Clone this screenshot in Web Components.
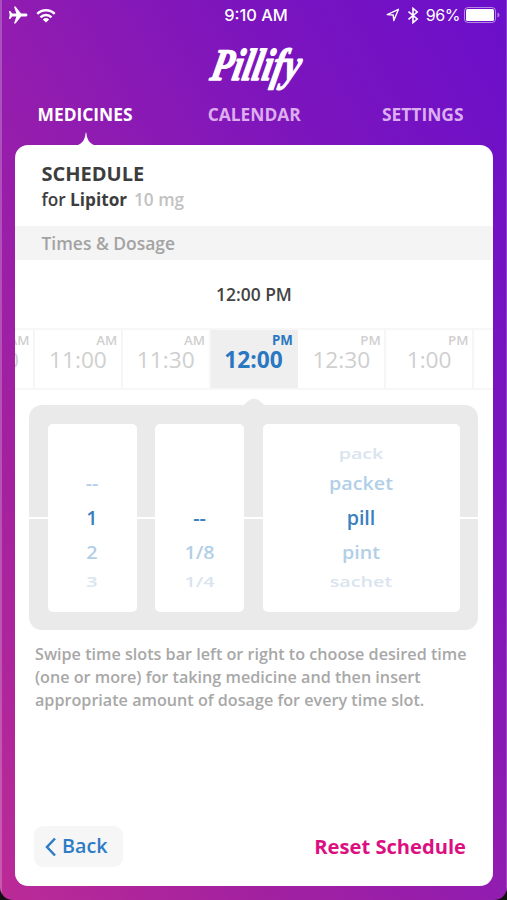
<!DOCTYPE html>
<html lang="en">
<head>
<meta charset="utf-8">
<title>Pillify</title>
<style>
html{background:#111}
body{margin:0;width:507px;height:900px;overflow:hidden;font-family:"Open Sans",sans-serif;font-weight:600}
</style>
</head>
<body>
<pill-app></pill-app>

<template id="t-app">
<style>
:host{display:flex;flex-direction:column;box-sizing:border-box;width:507px;height:900px;padding:0 14px 14px 15px;border-radius:0 0 13px 13px;
background:linear-gradient(90deg,rgba(255,255,255,.22) 0 2px,transparent 2px 506px,rgba(255,255,255,.2) 506px),linear-gradient(to bottom left,#6b0fcb 0%,#7a14be 25%,#911cb0 50%,#a3219f 75%,#bb2b97 100%)}
</style>
<status-bar></status-bar>
<brand-logo></brand-logo>
<nav-tabs></nav-tabs>
<schedule-card></schedule-card>
</template>

<template id="t-status">
<style>
:host{display:grid;grid-template-columns:1fr auto 1fr;align-items:center;height:30px;margin:0 -6px 0 -7px;color:#fff;font-family:Inter,sans-serif;font-size:16.4px;font-weight:500}
.l{display:flex;align-items:center;gap:8px}
.r{display:flex;align-items:center;justify-content:flex-end;font-size:16px;font-weight:400;letter-spacing:-.4px;margin-right:-1px}
svg{display:block;flex:none}
.mid{margin-left:5px}
</style>
<div class="l">
<svg width="20" height="18" viewBox="0 0 20 18" fill="#fff"><path d="M19.500 9c0-.8-.8-1.500-2-1.500h-4.400L7.500.4H6L8.400 7.500H4.200L2.300 5.100H.9L1.700 9 .9 12.900h1.400l1.900-2.400h4.200L6 17.600h1.500l5.600-7.100h4.400c1.200 0 2-.7 2-1.500Z"/></svg>
<svg width="20" height="15" viewBox="0 0 20 15"><g fill="none" stroke="#fff" stroke-width="2.500"><path d="M1.300 5.900a12.300 12.300 0 0 1 17.400 0"/><path d="M4.500 9.300a7.900 7.900 0 0 1 11 0"/></g><path d="M10 14.500 6.800 11.400a4.900 4.900 0 0 1 6.400 0Z" fill="#fff"/></svg>
</div>
<span class="mid">9:10 AM</span>
<div class="r">
<svg width="14" height="14" viewBox="0 0 14 14" style="margin-right:7px"><path d="M1.200 6.600 12.500 1.300 7.800 12.600 7.200 7Z" fill="none" stroke="#fff" stroke-width="1.400" stroke-linejoin="round"/></svg>
<svg width="12" height="17" viewBox="0 0 12 17" style="margin-right:7px"><path d="M1.500 4.600 10.200 12 6 15.600V1.400L10.200 5 1.500 12.400" fill="none" stroke="#fff" stroke-width="1.600"/></svg>
<span>96%</span>
<svg width="36" height="16" viewBox="0 0 36 16" style="margin-left:4px"><rect x=".5" y=".5" width="31" height="15" rx="3.500" fill="none" stroke="#fff" stroke-opacity=".5"/><rect x="2" y="2" width="28" height="12" rx="1.500" fill="#fff"/><path d="M33.500 5.500q2 .7 2 2.500t-2 2.500Z" fill="#fff" fill-opacity=".5"/></svg>
</div>
</template>

<template id="t-logo">
<style>
:host{display:flex;justify-content:center;height:68px}
svg{display:block;overflow:visible}
text{font:italic 700 31px "Liberation Serif",serif;fill:#fff;stroke:#fff;stroke-width:1;stroke-linejoin:round}
</style>
<svg width="96" height="68" viewBox="0 0 96 68"><text transform="translate(3 50) skewX(-12) scale(1 1.460)" textLength="89" lengthAdjust="spacingAndGlyphs">Pillify</text></svg>
</template>

<template id="t-tabs">
<style>
:host{display:flex;justify-content:space-between;align-items:center;height:34px;margin:-1px 29.500px 14px 22.500px;color:#dcaef0;font-size:17.400px;font-weight:700}
.on{color:#fff;position:relative}
.on svg{position:absolute;left:36px;top:30px}
.mid{margin-left:-6px}
</style>
<span class="on">MEDICINES<svg width="24" height="14" viewBox="0 0 24 14"><path d="M0 14C8 13 11 8 11.600 1q.4-1 .8 0C13 8 16 13 24 14Z" fill="#fff"/></svg></span>
<span class="mid">CALENDAR</span>
<span>SETTINGS</span>
</template>

<template id="t-card">
<style>
:host{display:flex;flex-direction:column;flex:1;min-height:0;background:#fff;border-radius:13px;overflow:hidden}
header{padding:15px 26px 0 26.500px;height:66px;color:#3d3d3d}
h1{margin:0;font-size:20px;line-height:28px;font-weight:700}
.sub{font-size:17.200px;line-height:25px;margin-top:-1px}
.sub b{font-weight:700}.sub span{color:#c2c2c2;margin-left:2.500px}
h2{margin:0;height:34px;line-height:34px;padding-left:26.500px;background:#f4f4f4;color:#a3a3a3;font-size:17.450px;font-weight:600}
.now{text-align:center;color:#434343;font-size:17.400px;line-height:24px;margin:22px 0}
p{margin:13px 20px 0;color:#a8a8a8;font-size:16.170px;line-height:23px;white-space:nowrap}
footer{display:flex;justify-content:space-between;align-items:center;margin:auto 27px 19px 19px}
</style>
<header><h1>SCHEDULE</h1><div class="sub">for <b>Lipitor</b> <span>10 mg</span></div></header>
<h2>Times &amp; Dosage</h2>
<div class="now">12:00 PM</div>
<time-strip></time-strip>
<dosage-picker></dosage-picker>
<p>Swipe time slots bar left or right to choose desired time<br>(one or more) for taking medicine and then insert<br>appropriate amount of dosage for every time slot.</p>
<footer><back-button>Back</back-button><reset-link>Reset Schedule</reset-link></footer>
</template>

<template id="t-strip">
<style>
:host{display:flex;justify-content:center;height:62px;width:479px;overflow:hidden;border-block:2px solid #f7f7f7;box-sizing:border-box}
</style>
<time-slot period="AM">10:30</time-slot><time-slot period="AM">11:00</time-slot><time-slot period="AM">11:30</time-slot><time-slot period="PM" selected>12:00</time-slot><time-slot period="PM">12:30</time-slot><time-slot period="PM">1:00</time-slot><time-slot></time-slot>
</template>

<template id="t-slot">
<style>
:host{display:flex;flex-direction:column;flex:none;box-sizing:border-box;width:87.800px;height:58px;border-right:2px solid #f6f6f6;color:#cfcfcf;text-align:center;font-size:22.700px;line-height:26px;font-weight:500}
small{display:block;font-size:13.300px;line-height:16px;height:16px;text-align:right;padding-right:3.500px;font-weight:600;margin-top:2px;margin-bottom:-1px}
:host([selected]){background:#efefef;border-color:#efefef;color:#2b78c2;font-weight:700}
:host([selected]) small{font-weight:700}
</style>
<small></small><div><slot></slot></div>
</template>

<template id="t-picker">
<style>
:host{display:grid;grid-template-columns:89px 89px 197px;column-gap:18.500px;position:relative;box-sizing:border-box;width:449px;height:225px;margin:15px 0 0 14px;padding:19px 18.500px;border-radius:13px;background:linear-gradient(transparent 112px,#fff 112px 114.500px,transparent 114.500px),#eaeaea}
.notch{position:absolute;left:212px;top:-7px}
</style>
<svg class="notch" width="26" height="8" viewBox="0 0 26 8"><path d="M0 8C5 7 7 1 13 .5 19 1 21 7 26 8Z" fill="#eaeaea"/></svg>
<picker-wheel values="|--|1|2|3"></picker-wheel>
<picker-wheel values="||--|1/8|1/4"></picker-wheel>
<picker-wheel values="pack|packet|pill|pint|sachet"></picker-wheel>
</template>

<template id="t-wheel">
<style>
:host{display:flex;flex-direction:column;align-items:center;justify-content:center;box-sizing:border-box;height:188px;background:#fff;border-radius:5px;color:#3b80c0;font-size:19.700px}
div{white-space:pre;line-height:34.500px;height:34.500px}
.d1{color:#b2cfe8;transform:scaleY(.95)}
.d2{height:24px;line-height:24px;color:#d9e4ef;transform:scaleY(.75)}
</style>
</template>

<template id="t-back">
<style>
:host{display:flex;align-items:center;gap:6px;box-sizing:border-box;width:89px;height:41px;padding:0 0 2px 11px;border-radius:9px;background:#f6f6f6;color:#2d7cc5;font-size:19.700px}
svg{margin-top:2px}
</style>
<svg width="11" height="20" viewBox="0 0 11 20"><path d="M10 1.500 2 10 10 18.500" fill="none" stroke="#2d7cc5" stroke-width="2.500"/></svg><slot></slot>
</template>

<template id="t-reset">
<style>:host{display:block;color:#db0f7f;font-size:20.150px;font-weight:700;padding-bottom:2px}</style>
<slot></slot>
</template>

<script>
class Base extends HTMLElement{
  connectedCallback(){
    if(this.shadowRoot) return;
    const root=this.attachShadow({mode:'open'});
    root.append(document.getElementById(this.constructor.tpl).content.cloneNode(true));
    this.fill(root);
  }
  fill(){}
}
const simple={'status-bar':'t-status','brand-logo':'t-logo','nav-tabs':'t-tabs','time-strip':'t-strip','dosage-picker':'t-picker','back-button':'t-back','reset-link':'t-reset','schedule-card':'t-card','pill-app':'t-app'};
customElements.define('time-slot',class extends Base{
  static tpl='t-slot';
  fill(root){root.querySelector('small').textContent=this.getAttribute('period')||''}
});
customElements.define('picker-wheel',class extends Base{
  static tpl='t-wheel';
  fill(root){
    this.getAttribute('values').split('|').forEach((v,i)=>{
      const row=document.createElement('div');
      row.className='d'+Math.abs(i-2);
      row.textContent=v;
      root.append(row);
    });
  }
});
for(const [name,tpl] of Object.entries(simple)) customElements.define(name,class extends Base{static tpl=tpl});
</script>
</body>
</html>
